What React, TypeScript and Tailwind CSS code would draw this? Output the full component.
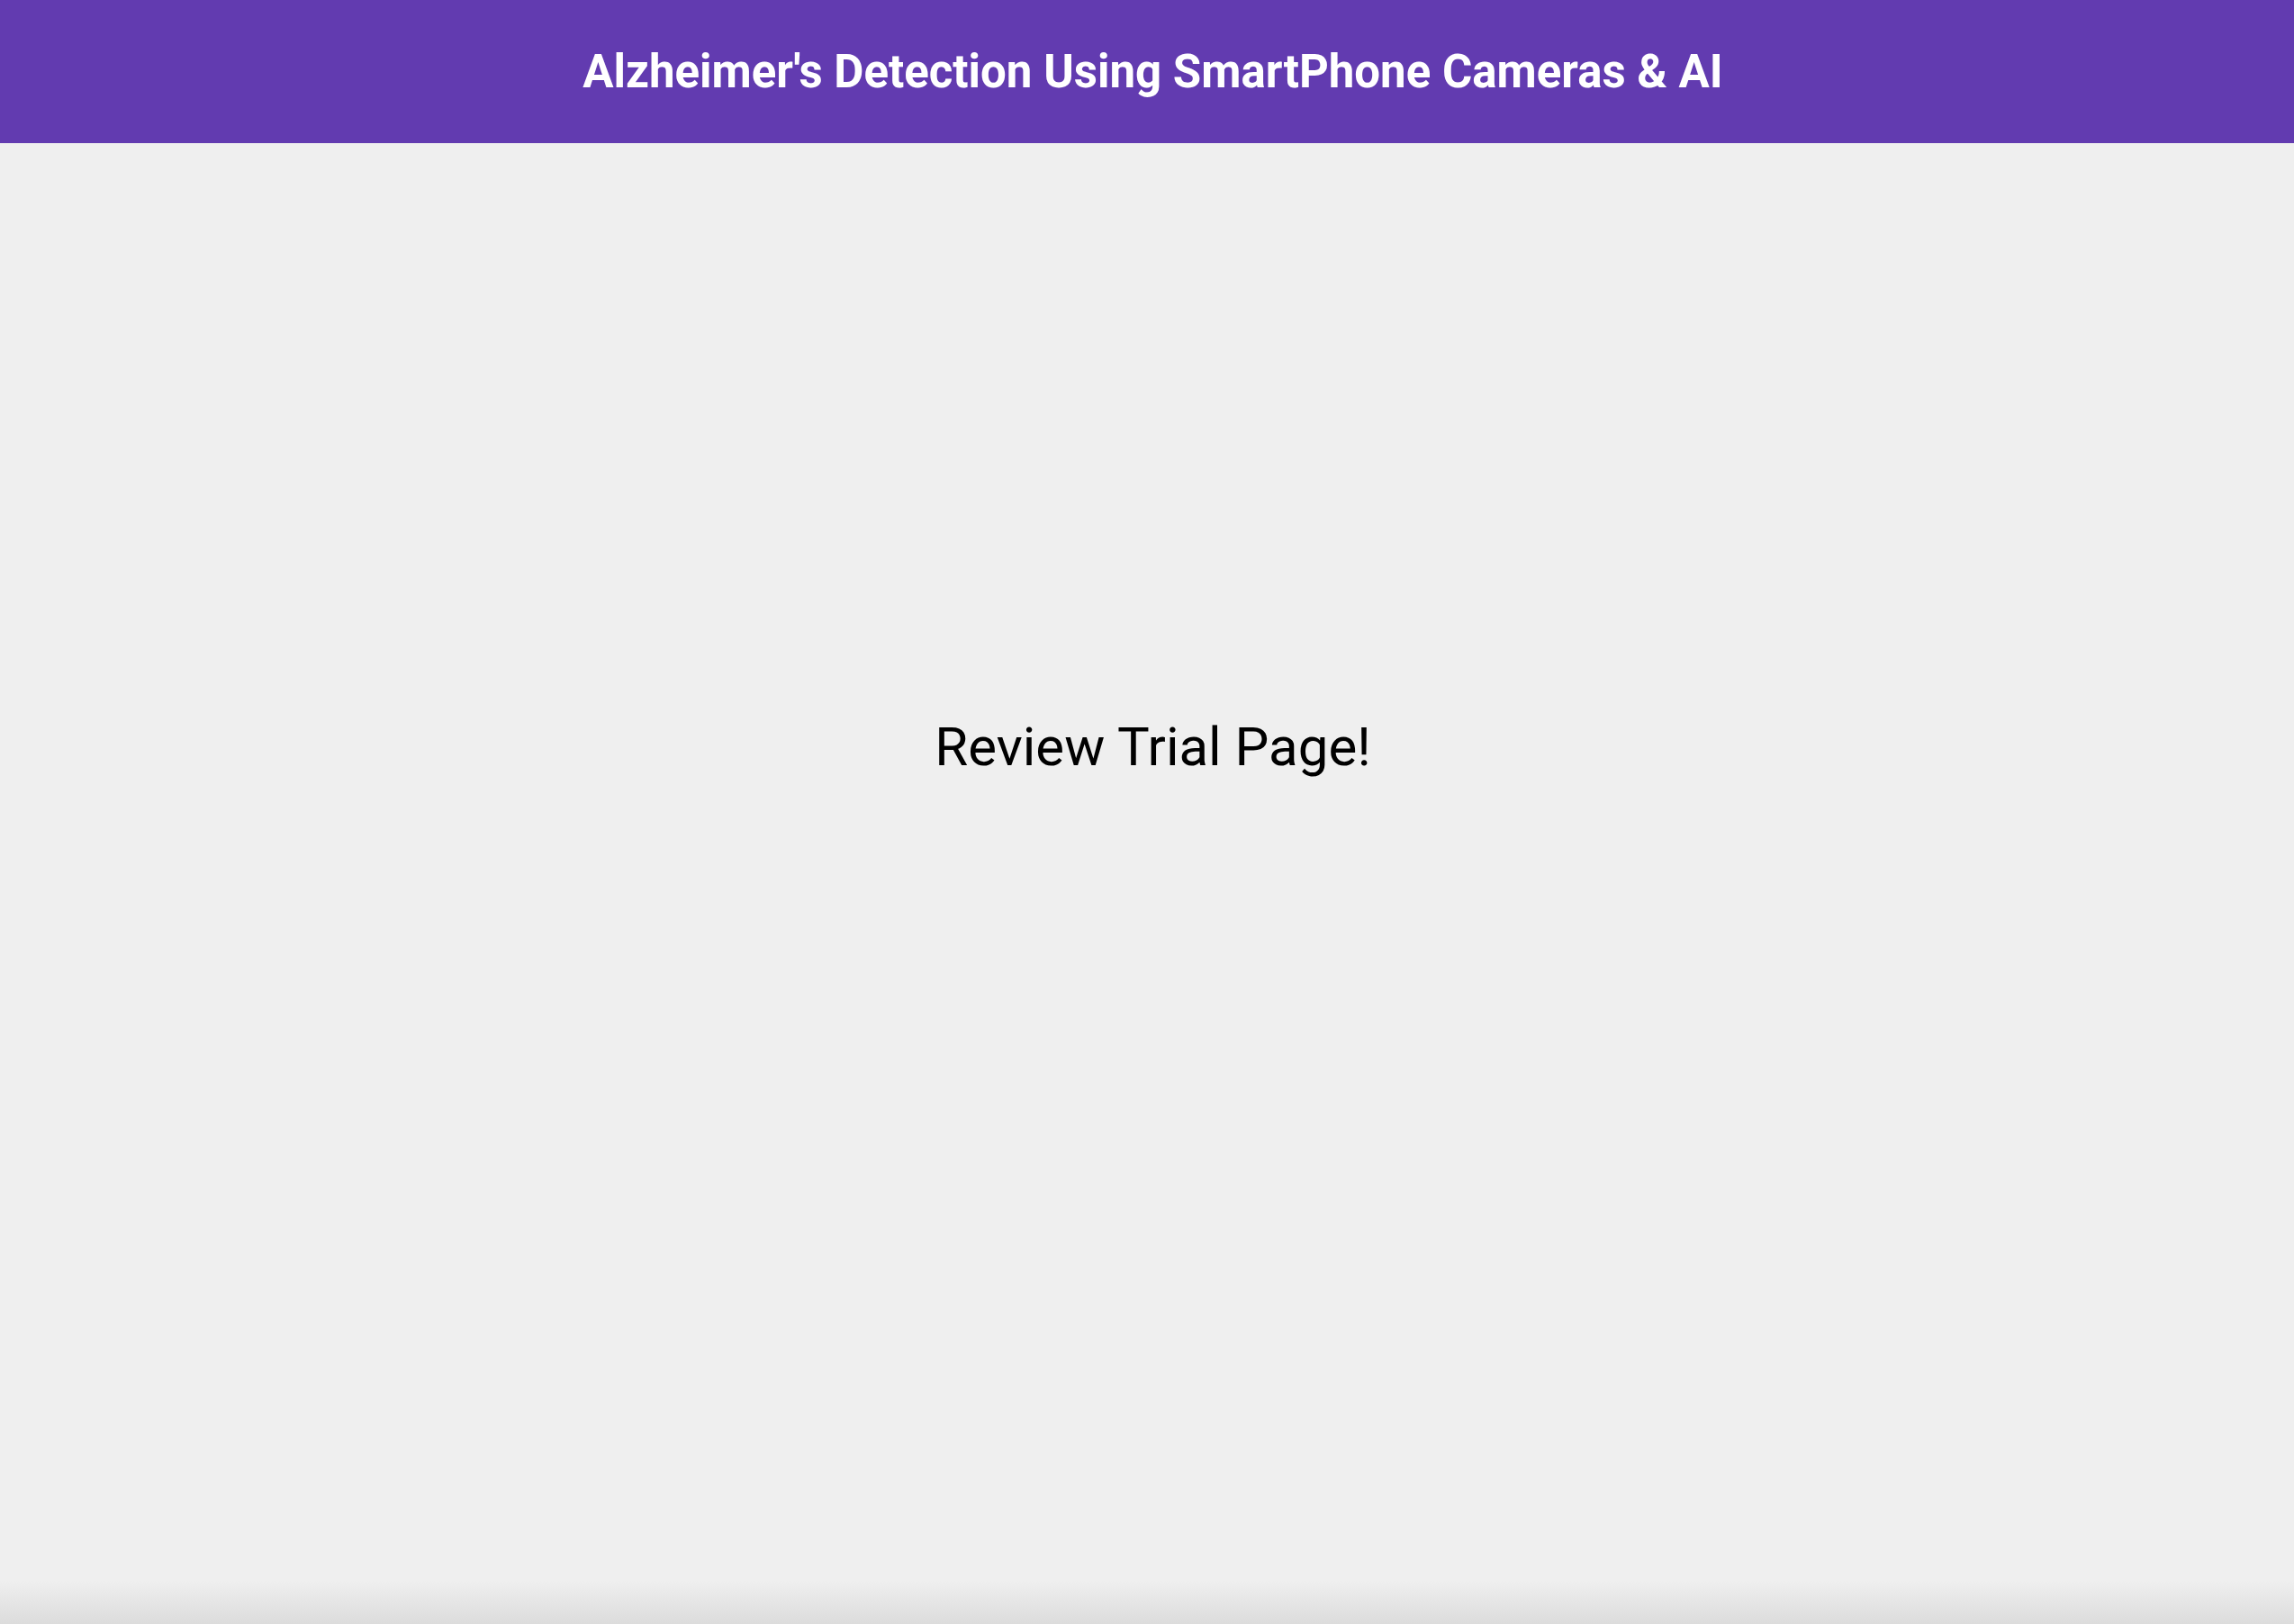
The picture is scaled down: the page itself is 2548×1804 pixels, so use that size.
export default function App() {
    return (
        <div className="min-h-screen h-[1804px] flex flex-col bg-[#efefef] font-['Roboto',sans-serif]">
            <header className="h-[159px] shrink-0 flex items-center justify-center pl-[13px] bg-[#623bb0]">
                <h1 className="text-[51px] font-bold text-white leading-none">
                    Alzheimer's Detection Using SmartPhone Cameras &amp; AI
                </h1>
            </header>
            <main className="flex-1 flex flex-col">
                <div className="flex-1 flex justify-center pl-[13px] pt-[641px]">
                    <p className="text-[60px] text-black leading-none">Review Trial Page!</p>
                </div>
                <div className="h-[48px] bg-gradient-to-b from-[#efefef] to-[#dcdcdc]" />
            </main>
        </div>
    )
}
